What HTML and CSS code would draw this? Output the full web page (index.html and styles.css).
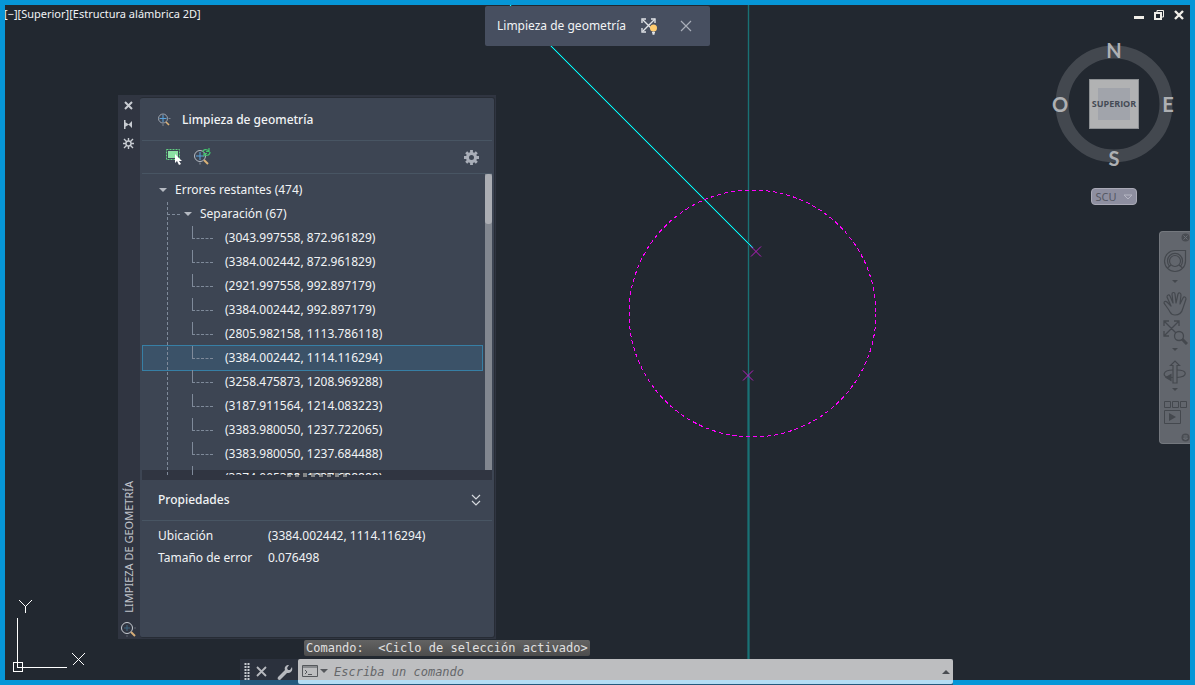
FILE: index.html
```html
<!DOCTYPE html>
<html lang="es">
<head>
<meta charset="utf-8">
<title>Limpieza de geometría</title>
<link rel="stylesheet" href="styles.css">
</head>
<body>
<main class="viewport">
  <svg class="drawing" width="100%" height="100%" aria-hidden="true">
    <g shape-rendering="crispEdges">
      <rect x="747" y="5" width="3" height="100%" fill="#20363c"/>
      <rect x="747" y="375" width="3" height="100%" fill="#1b565b"/>
      <rect x="748" y="5" width="1" height="100%" fill="#197175"/>
    </g>
    <line x1="510" y1="5" x2="753" y2="248" stroke="#1c5a60" stroke-width="2"/>
    <line x1="510.500" y1="5.500" x2="753.500" y2="248.500" stroke="#0ff" shape-rendering="crispEdges"/>
    <circle cx="752.5" cy="313.5" r="123.5" fill="none" stroke="#f0f" stroke-dasharray="4 3" shape-rendering="crispEdges"/>
    <path d="M751 246.500l10 10M761 246.500l-10 10M743 370.500l10 10M753 370.500l-10 10" stroke="#b61dc0"/>
    <g fill="none" stroke="#fff" shape-rendering="crispEdges">
      <path d="M13.500 662.500h9v9h-9zM17.500 618v49.500H67"/>
      <path d="M19.500 600.500l6 6l6-6M25.500 606.500v6M72.500 653.500l12 12M84.500 653.500l-12 12"/>
    </g>
  </svg>

  <h1 class="view-label">[−][Superior][Estructura alámbrica 2D]</h1>

  <div class="window-buttons">
    <button aria-label="Minimizar"><svg width="12" height="12"><path d="M1 7h10v3H1z" fill="#f0eee8"/></svg></button>
    <button aria-label="Restaurar"><svg width="12" height="12" fill="none" stroke="#f0eee8"><path d="M4 3V1.500h6.500V8H9"/><path d="M2 4h6v6H2z" stroke-width="2"/></svg></button>
    <button aria-label="Cerrar"><svg width="12" height="12"><path d="M2 2l8 8M10 2l-8 8" stroke="#f0eee8" stroke-width="2.400"/></svg></button>
  </div>

  <section class="mini-bar" aria-label="Limpieza de geometría">
    <span class="mini-title">Limpieza de geometría</span>
    <button aria-label="Mostrar errores">
      <svg width="18" height="18" fill="none" stroke="#dfe2e6">
        <path d="M3 3l11 11M15 2L3 14" stroke-width="1.400"/>
        <path d="M2 6V2h4M11 2h4v4M2 11v4h4" stroke-width="1.400"/>
        <circle cx="13.500" cy="11" r="3.500" fill="#ffcc70" stroke="none"/>
        <path d="M12 15.500h3M12.500 17h2" stroke-width="1.500"/>
      </svg>
    </button>
    <button class="mini-close" aria-label="Cerrar barra"><svg width="12" height="12"><path d="M1 1l10 10M11 1L1 11" stroke="#a9aeb9" stroke-width="1.200"/></svg></button>
  </section>

  <nav class="viewcube" aria-label="ViewCube">
    <svg class="ring" width="128" height="128"><circle cx="64" cy="64" r="52" fill="none" stroke="#43484f" stroke-width="13"/></svg>
    <button class="north">N</button>
    <button class="west">O</button>
    <button class="face">SUPERIOR</button>
    <button class="east">E</button>
    <button class="south">S</button>
  </nav>
  <button class="ucs">SCU <svg width="10" height="6"><path d="M1 1h8L5 5z" fill="none" stroke="#b5b6c3"/></svg></button>

  <nav class="nav-bar" aria-label="Barra de navegación">
    <button class="corner" aria-label="Cerrar"><svg width="9" height="9"><circle cx="4.500" cy="4.500" r="4" fill="#484c52"/><path d="M2.500 2.500l4 4M6.500 2.500l-4 4" stroke="#6c7077"/></svg></button>
    <button class="tool wheel" aria-label="Rueda de navegación"><svg width="24" height="24" fill="none" stroke="#44484e" stroke-width="1.200"><path d="M22.500 1.500H12A10.500 10.500 0 1 0 22.500 12z"/><path d="M6.500 17a7.500 7.500 0 1 1 11 0"/><circle cx="12" cy="12" r="5.500"/><path d="M4.500 19l3.500-3M19.500 19L16 16"/></svg></button>
    <span class="caret"></span>
    <button class="tool hand" aria-label="Encuadre"><svg width="26" height="26" fill="none" stroke="#44484e" stroke-width="1.200" stroke-linejoin="round"><path d="M8 21C6 17 3 14 2 12c0-2 2-2 3-1l4 4L5 6c0-2 2-3 3-1l3 7-1-9c0-2 3-2 3 0l1 9 2-9c1-2 3-1 3 1l-1 9 3-6c1-2 3-1 3 1l-3 9c-1 4-4 7-8 7-2 0-4-1-5-3z"/></svg></button>
    <button class="tool" aria-label="Zoom extensión"><svg width="26" height="26" fill="none" stroke="#44484e" stroke-width="1.300"><path d="M2 2l13 13M17 2L2 17M2 7V2h5M12 2h5v5M2 12v5h5"/><circle cx="17" cy="17" r="4.500" fill="#62666d"/><path d="M20 20l5 5" stroke-width="3"/></svg></button>
    <span class="caret tall"></span>
    <button class="tool" aria-label="Órbita"><svg width="26" height="26" fill="none" stroke="#44484e" stroke-width="1.200"><path d="M11 24V6.500H8.500L13 2l4.500 4.500H15V24z"/><path d="M11 11c-11 0-11 7-4 7.500h4M15 11c11 0 11 7 0 7.500"/><path d="M9 15.500v6l-5-3z" fill="#44484e"/></svg></button>
    <span class="caret tall"></span>
    <button class="tool" aria-label="ShowMotion"><svg width="26" height="26" fill="none" stroke="#44484e"><path d="M2.500 2.500h6v6h-6zM10.500 2.500h6v6h-6zM18.500 2.500h6v6h-6zM2.500 11.500h16v13h-16z"/><path d="M7 14v8l7-4z" fill="#44484e" stroke="none"/></svg></button>
    <button class="corner last" aria-label="Opciones"><svg width="9" height="9"><circle cx="4.500" cy="4.500" r="4" fill="#484c52"/><path d="M2.500 3h4M2.500 5h4L4.500 7z" stroke="#6c7077" fill="none"/></svg></button>
  </nav>

  <section class="palette">
    <aside class="strip">
      <button aria-label="Cerrar"><svg width="11" height="11"><path d="M2 2l7 7M9 2L2 9" stroke="#c8ccd2" stroke-width="2"/></svg></button>
      <button aria-label="Ocultar automáticamente"><svg width="11" height="11" fill="#c8ccd2"><path d="M1 1h1.500v9H1zM2 3l4 2.500L2 8zM9 2v7L5.500 5.500z"/></svg></button>
      <button aria-label="Propiedades"><svg width="11" height="11" fill="none" stroke="#c8ccd2"><circle cx="5.500" cy="5.500" r="2.500" stroke-width="1.400"/><path d="M5.500 0v3M5.500 8v3M0 5.500h3M8 5.500h3M1 1l3 3M10 1L7 4M1 10l3-3M10 10L7 7" stroke-width="1.400"/></svg></button>
      <span class="strip-title">LIMPIEZA DE GEOMETRÍA</span>
      <svg width="17" height="17" fill="none"><circle cx="7" cy="7" r="5.500" stroke="#c8ccd2"/><path d="M7 4v6M4 7h6" stroke="#3f6680"/><path d="M7 14v2M14 7h2" stroke="#5c636e"/><path d="M11 11l4 4" stroke="#d6ad77" stroke-width="2"/></svg>
    </aside>

    <div class="panel">
      <header class="panel-title">
        <svg width="14" height="14" fill="none"><circle cx="6" cy="5.500" r="4.500" stroke="#9ea5b0"/><path d="M6 2v7M2.500 5.500h7" stroke="#5aa4de"/><path d="M6 11v2M11.500 5.500h2" stroke="#7d8490"/><path d="M9 9l3 3" stroke="#dcb277" stroke-width="1.600"/></svg>
        <h2>Limpieza de geometría</h2>
      </header>

      <div class="toolbar">
        <button aria-label="Seleccionar objetos"><svg width="18" height="18"><path d="M3 3h10v7H3z" fill="#8be0a3"/><path d="M1.500 1.500h13v10h-13z" fill="none" stroke="#62cf83" stroke-dasharray="2 1"/><path d="M10 6v9l2-2 2 4 2-1-2-3h3z" fill="#fff"/></svg></button>
        <button aria-label="Buscar errores"><svg width="18" height="18" fill="none"><circle cx="7" cy="8" r="5.500" stroke="#b5bac2"/><path d="M7 4v8M3 8h8" stroke="#5aa4de"/><path d="M11 12l4 4" stroke="#dcb277" stroke-width="2"/><path d="M7 14.500v2" stroke="#8c939e"/><path d="M10 4c0-3 4-3 6-1M16 0v3.500h-3M17 4c0 4-5 4-6 2M11 8.500V5.500h3" stroke="#44c06d" stroke-width="1.200"/></svg></button>
        <button class="settings" aria-label="Configuración"><svg width="15" height="15" fill="none" stroke="#a9aeb8"><circle cx="7.500" cy="7.500" r="4" stroke-width="3"/><path d="M7.500 0v3M7.500 12v3M0 7.500h3M12 7.500h3M2.200 2.200l2 2M12.800 2.200l-2 2M2.200 12.800l2-2M12.800 12.800l-2-2" stroke-width="2.800"/></svg></button>
      </div>

      <div class="tree-area">
        <ul class="tree">
          <li>
            <div class="row root"><span class="arrow"></span>Errores restantes (474)</div>
            <ul class="branch">
              <li>
                <div class="row group"><span class="arrow"></span>Separación (67)</div>
                <ul>
                  <li class="row leaf">(3043.997558, 872.961829)</li>
                  <li class="row leaf">(3384.002442, 872.961829)</li>
                  <li class="row leaf">(2921.997558, 992.897179)</li>
                  <li class="row leaf">(3384.002442, 992.897179)</li>
                  <li class="row leaf">(2805.982158, 1113.786118)</li>
                  <li class="row leaf selected">(3384.002442, 1114.116294)</li>
                  <li class="row leaf">(3258.475873, 1208.969288)</li>
                  <li class="row leaf">(3187.911564, 1214.083223)</li>
                  <li class="row leaf">(3383.980050, 1237.722065)</li>
                  <li class="row leaf">(3383.980050, 1237.684488)</li>
                  <li class="row leaf">(3374.005388, 1237.688888)</li>
                </ul>
              </li>
            </ul>
          </li>
        </ul>
        <div class="scroll"><div class="thumb"></div></div>
      </div>

      <div class="splitter"></div>

      <section class="properties">
        <header>
          <h2>Propiedades</h2>
          <button aria-label="Contraer"><svg width="10" height="12" fill="none" stroke="#d5d8dd" stroke-width="1.200"><path d="M1 1l4 4 4-4M1 7l4 4 4-4"/></svg></button>
        </header>
        <dl>
          <dt>Ubicación</dt><dd>(3384.002442, 1114.116294)</dd>
          <dt>Tamaño de error</dt><dd>0.076498</dd>
        </dl>
      </section>
    </div>
  </section>

  <output class="history">Comando:  &lt;Ciclo de selección activado&gt;</output>

  <form class="command">
    <div class="command-tools">
      <svg width="6" height="18"><path d="M1.500 0v18M4.500 0v18" stroke="#c8ccd2" stroke-width="2" stroke-dasharray="2 1"/></svg>
      <button type="button" aria-label="Cerrar"><svg width="11" height="11"><path d="M1 1l9 9M10 1l-9 9" stroke="#b6b9bf" stroke-width="1.800"/></svg></button>
      <button type="button" aria-label="Personalizar"><svg width="16" height="16"><path d="M1 13l7-7c-1-3 1-5 4-5L10 4l1 2 2 0 2-3c1 4-1 6-5 6l-7 7c-2 0-3-1-2-3z" fill="#b6b9bf"/></svg></button>
    </div>
    <div class="command-line">
      <button type="button" class="recent" aria-label="Comandos recientes"><svg width="26" height="13" fill="none" stroke="#55585c"><path d="M.5.500h15v11H.5zM0 2h16" /><path d="M3 5l2 2-2 2M6 9.500h4"/><path d="M18 4h8l-4 4z" fill="#55585c" stroke="none"/></svg></button>
      <input type="text" aria-label="Comando" placeholder="Escriba un comando">
      <button type="button" aria-label="Ampliar historial"><svg width="8" height="5"><path d="M0 5l4-4 4 4z" fill="#4a4d52"/></svg></button>
    </div>
  </form>
</main>
</body>
</html>
```
FILE: styles.css
```css
* { box-sizing: border-box; }

body {
  margin: 0;
  font: 12px/24px "Noto Sans", "Open Sans", sans-serif;
  color: #f1f3f5;
}

button {
  display: flex;
  align-items: center;
  justify-content: center;
  padding: 0;
  border: 0;
  background: none;
  color: inherit;
  font: inherit;
}

svg { display: block; flex: none; }
ul, dl, dd { margin: 0; padding: 0; list-style: none; }
h1, h2 { margin: 0; font-size: 12px; font-weight: 500; }

.viewport {
  position: relative;
  min-height: 100vh;
  overflow: hidden;
  background: #222830;
}
.viewport::after {
  content: "";
  position: absolute;
  inset: 0;
  border: 5px solid #0696d7;
  pointer-events: none;
}
.drawing { position: absolute; inset: 0; }

.view-label {
  position: absolute;
  top: 6px;
  left: 4px;
  font-size: 11px;
  font-weight: 400;
  line-height: 16px;
}

.window-buttons {
  position: absolute;
  top: 9px;
  right: 10px;
  display: flex;
  gap: 8px;
}

.mini-bar {
  position: absolute;
  top: 6px;
  left: 485px;
  display: flex;
  align-items: center;
  width: 225px;
  height: 40px;
  padding: 0 18px 0 12px;
  border-radius: 2px;
  background: #474f60;
}
.mini-title { margin-right: 14px; }
.mini-close { margin-left: auto; }

.viewcube {
  position: absolute;
  top: 40px;
  right: 17px;
  display: grid;
  grid-template: 20px 1fr 20px / 20px 1fr 20px;
  place-items: center;
  width: 128px;
  height: 128px;
  color: #aeb0b3;
  font: bold 20px/20px Lato, sans-serif;
}
.ring { position: absolute; inset: 0; }
.viewcube button { position: relative; }
.north { grid-area: 1 / 2; }
.west { grid-area: 2 / 1; }
.east { grid-area: 2 / 3; }
.south { grid-area: 3 / 2; }
.viewcube .face {
  grid-area: 2 / 2;
  width: 50px;
  height: 50px;
  border: 1px solid #8d9093;
  background: linear-gradient(#a1a4ab, #a1a4ab) center / 32px 32px no-repeat #b1b2b3;
  color: #454b55;
  font: bold 9px/12px "Open Sans", sans-serif;
}

.ucs {
  position: absolute;
  top: 188px;
  right: 58px;
  gap: 6px;
  width: 46px;
  height: 17px;
  border: 1px solid #aaaab6;
  border-radius: 4px;
  background: #8e8fa0;
  color: #555864;
  font-size: 11px;
}

.nav-bar {
  position: absolute;
  top: 231px;
  right: 5px;
  display: flex;
  flex-direction: column;
  align-items: center;
  width: 31px;
  padding-bottom: 1px;
  border: 1px solid #74787e;
  border-right: 0;
  border-radius: 4px 0 0 4px;
  background: #62666d;
}
.corner { align-self: flex-end; height: 10px; }
.last { margin-top: 6px; }
.tool { height: 28px; }
.wheel { height: 38px; }
.caret {
  height: 10px;
  border: 3px solid transparent;
  border-top: 3px solid #44484e;
}
.tall { margin-top: 2px; }

.palette {
  position: absolute;
  top: 95px;
  left: 118px;
  display: flex;
  width: 378px;
  height: 544px;
  padding: 2px 1px 1px 0;
  background: #303541;
}
.strip {
  display: flex;
  flex-direction: column;
  align-items: center;
  gap: 8px;
  width: 22px;
  padding: 3px 1px 0 0;
}
.strip-title {
  margin-top: auto;
  writing-mode: vertical-rl;
  transform: rotate(180deg);
  color: #c0c4cb;
  font-size: 11px;
  line-height: 16px;
}
.panel {
  display: flex;
  flex: 1;
  flex-direction: column;
  min-width: 0;
  padding: 0 2px;
  border: 1px solid #272c35;
  border-width: 1px 1px 1px 0;
  border-radius: 3px;
  background: #3d4553;
}
.panel-title {
  display: flex;
  align-items: center;
  gap: 11px;
  height: 43px;
  padding: 1px 0 0 15px;
  border-bottom: 1px solid #485563;
}
.toolbar {
  display: flex;
  align-items: center;
  gap: 10px;
  height: 33px;
  padding: 0 13px 0 23px;
  border-bottom: 1px solid #485563;
}
.settings { margin-left: auto; }

.tree-area {
  z-index: 1;
  display: flex;
  flex: 1;
  gap: 2px;
  min-height: 0;
  margin-bottom: -5px;
}
.tree {
  flex: 1;
  padding-top: 4px;
  overflow: hidden;
}
.row {
  position: relative;
  display: flex;
  align-items: center;
  height: 24px;
  white-space: nowrap;
}
.root { gap: 8px; padding-left: 17px; }
.group { gap: 8px; padding-left: 42px; }
.leaf { padding-left: 83px; }
.arrow {
  border: 4px solid transparent;
  border-top: 4px solid #b5bac2;
  border-bottom: 0;
}
.branch { position: relative; }
.branch::before {
  content: "";
  position: absolute;
  z-index: 1;
  top: 0;
  bottom: 0;
  left: 25px;
  border-left: 1px dashed #7f8a9a;
}
.group::before {
  content: "";
  position: absolute;
  top: 12px;
  left: 25px;
  width: 13px;
  border-top: 1px dashed #7f8a9a;
}
.leaf::before {
  content: "";
  position: absolute;
  top: 0;
  left: 50px;
  height: 12px;
  border-left: 1px solid #7f8a9a;
}
.leaf::after {
  content: "";
  position: absolute;
  top: 12px;
  left: 50px;
  width: 21px;
  border-top: 1px dashed #7f8a9a;
}
.selected {
  margin: 0 1px;
  padding-left: 82px;
  outline: 1px solid #377fa5;
  background: #3b5268;
}
.selected::before, .selected::after { left: 49px; }
.scroll {
  width: 7px;
  margin-bottom: 5px;
  background: #828790;
}
.thumb {
  height: 50px;
  border-radius: 3px;
  background: #abadb3;
}
.splitter {
  height: 10px;
  background: repeating-linear-gradient(90deg, #858687 0 4px, transparent 4px 8px) center 3px / 60px 4px no-repeat #303541;
}

.properties { height: 157px; }
.properties header {
  display: flex;
  align-items: center;
  justify-content: space-between;
  height: 41px;
  padding: 0 11px 0 16px;
  border-bottom: 1px solid #485563;
}
.properties dl {
  display: grid;
  grid-template-columns: 110px 1fr;
  padding: 4px 16px;
  line-height: 22px;
}

.history {
  position: absolute;
  bottom: 29px;
  left: 304px;
  padding: 0 2px;
  border-radius: 2px;
  background: linear-gradient(#636363, #4c4c4c);
  color: #e0e0e0;
  font: 12px/16px "DejaVu Sans Mono", monospace;
  white-space: pre;
}
.command {
  position: absolute;
  z-index: 1;
  bottom: 0;
  left: 240px;
  display: flex;
  width: 713px;
  height: 26px;
  padding-bottom: 1px;
  background: linear-gradient(#2b313d 21px, #235a7e 21px);
}
.command-tools {
  display: flex;
  align-items: center;
  gap: 6px;
  width: 58px;
  padding-left: 4px;
}
.command-tools button:last-child { margin-left: 4px; }
.command-line {
  display: flex;
  flex: 1;
  align-items: center;
  gap: 6px;
  padding: 0 3px 0 4px;
  border-radius: 2px;
  background: linear-gradient(#bdbec0 21px, #b4def5 21px);
}
.command-line input {
  flex: 1;
  min-width: 0;
  padding: 0;
  border: 0;
  outline: 0;
  background: none;
  font: italic 12px/16px "DejaVu Sans Mono", monospace;
}
.command-line input::placeholder { color: #65676a; opacity: 1; }
```
